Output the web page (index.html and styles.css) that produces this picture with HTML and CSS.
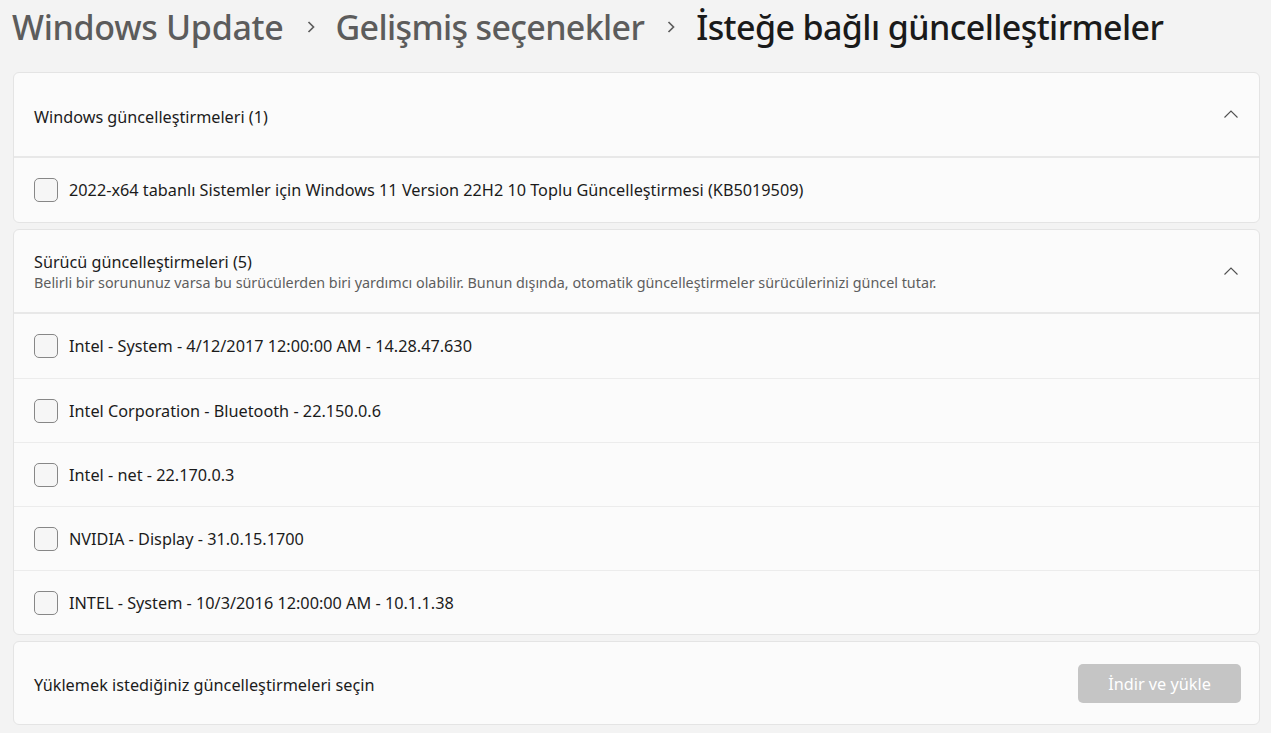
FILE: index.html
```html
<!DOCTYPE html>
<html lang="tr">
<head>
<meta charset="utf-8">
<title>İsteğe bağlı güncelleştirmeler</title>
<link rel="stylesheet" href="styles.css">
</head>
<body>
<div class="page">
  <h1 class="crumbs">
    <span class="crumb c1">Windows Update</span>
    <svg class="sep" viewBox="0 0 8 12" width="8" height="12"><path d="M1.5 1 L6.5 6 L1.5 11" fill="none" stroke="#5c5c5c" stroke-width="1.7"/></svg>
    <span class="crumb c2">Gelişmiş seçenekler</span>
    <svg class="sep" viewBox="0 0 8 12" width="8" height="12"><path d="M1.5 1 L6.5 6 L1.5 11" fill="none" stroke="#5c5c5c" stroke-width="1.7"/></svg>
    <span class="crumb c3 current">İsteğe bağlı güncelleştirmeler</span>
  </h1>

  <section class="card">
    <div class="card-head head-single">
      <div class="head-text">
        <div class="head-title">Windows güncelleştirmeleri (1)</div>
      </div>
      <svg class="chev" viewBox="0 0 14 8" width="14" height="8"><path d="M0.5 7.5 L7 1 L13.5 7.5" fill="none" stroke="#505050" stroke-width="1.1"/></svg>
    </div>
    <div class="row"><span class="box"></span><span class="label">2022-x64 tabanlı Sistemler için Windows 11 Version 22H2 10 Toplu Güncelleştirmesi (KB5019509)</span></div>
  </section>

  <section class="card">
    <div class="card-head">
      <div class="head-text">
        <div class="head-title">Sürücü güncelleştirmeleri (5)</div>
        <div class="head-sub">Belirli bir sorununuz varsa bu sürücülerden biri yardımcı olabilir. Bunun dışında, otomatik güncelleştirmeler sürücülerinizi güncel tutar.</div>
      </div>
      <svg class="chev" viewBox="0 0 14 8" width="14" height="8"><path d="M0.5 7.5 L7 1 L13.5 7.5" fill="none" stroke="#505050" stroke-width="1.1"/></svg>
    </div>
    <div class="row"><span class="box"></span><span class="label">Intel - System - 4/12/2017 12:00:00 AM - 14.28.47.630</span></div>
    <div class="row"><span class="box"></span><span class="label">Intel Corporation - Bluetooth - 22.150.0.6</span></div>
    <div class="row"><span class="box"></span><span class="label">Intel - net - 22.170.0.3</span></div>
    <div class="row"><span class="box"></span><span class="label">NVIDIA - Display - 31.0.15.1700</span></div>
    <div class="row"><span class="box"></span><span class="label">INTEL - System - 10/3/2016 12:00:00 AM - 10.1.1.38</span></div>
  </section>

  <section class="card footer">
    <span class="label foot-label">Yüklemek istediğiniz güncelleştirmeleri seçin</span>
    <button class="btn" disabled>İndir ve yükle</button>
  </section>
</div>
</body>
</html>
```

FILE: styles.css
```css
* { box-sizing: border-box; }
html, body { margin: 0; padding: 0; }
body {
  background: #f3f3f3;
  font-family: "Noto Sans", "Open Sans", sans-serif;
  color: #1b1b1b;
  width: 1271px;
  height: 733px;
  overflow: hidden;
}
.page {
  padding: 0 11px 0 13px;
}
.crumbs {
  margin: 0 0 0 -1px;
  height: 72px;
  padding-top: 4px;
  display: flex;
  align-items: flex-start;
  font-weight: 500;
  font-size: 34px;
  line-height: 46px;
  letter-spacing: -0.3px;
}
.crumb { color: #5c5c5c; }
.crumb.c2 { letter-spacing: -0.65px; }
.crumb.c3 { letter-spacing: -0.6px; }
.crumb.current { color: #1a1a1a; }
.sep { margin: 17px 21px 0 23px; flex: none; }
.card {
  background: #fbfbfb;
  border: 1px solid #e4e4e4;
  border-radius: 6px;
  margin-bottom: 6px;
}
.card-head {
  height: 84px;
  display: flex;
  align-items: center;
  justify-content: space-between;
  padding: 0 21px 0 20px;
  border-bottom: 2px solid #e8e8e8;
}
.head-single { height: 85px; }
.head-single .head-text { padding-top: 4px; }
.head-title { font-size: 16.2px; line-height: 22px; color: #1b1b1b; }
.head-sub { font-size: 14.35px; line-height: 19px; color: #5e5e5e; }
.chev { flex: none; margin-top: -1px; }
.row {
  height: 64px;
  display: flex;
  align-items: center;
  padding-left: 20px;
  border-top: 1px solid #ececec;
}
.card-head + .row { border-top: none; }
.box {
  width: 24px;
  height: 24px;
  border: 1px solid #878787;
  border-radius: 5px;
  background: #f6f6f6;
  margin-right: 11px;
  flex: none;
}
.label { font-size: 16.25px; color: #1b1b1b; }
.foot-label { padding-top: 3px; }
.footer {
  height: 84px;
  display: flex;
  align-items: center;
  justify-content: space-between;
  padding: 0 18px 0 20px;
}
.btn {
  width: 163px;
  height: 39px;
  border: none;
  border-radius: 5px;
  background: #c5c5c5;
  color: #ffffff;
  font-family: inherit;
  font-size: 16.25px;
  margin-top: 1px;
}
```
